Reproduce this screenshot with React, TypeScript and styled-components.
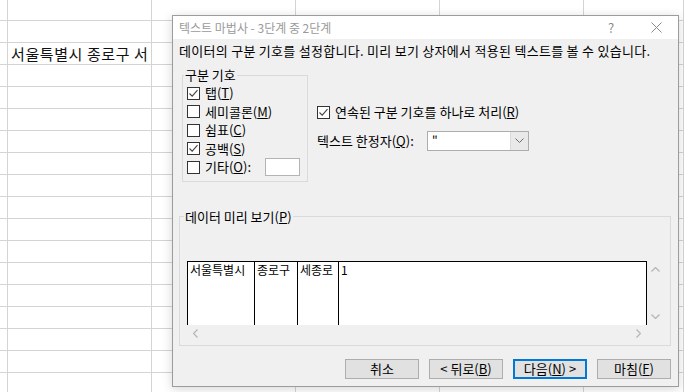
import React from "react";
import styled, { createGlobalStyle } from "styled-components";

const FONT = `"Noto Sans CJK KR", "Noto Sans", sans-serif`;

const GlobalStyle = createGlobalStyle`
  html, body {
    margin: 0;
    padding: 0;
    background: #ffffff;
    overflow: hidden;
  }
  body {
    font-family: ${FONT};
    font-size: 13px;
    color: #000;
  }
`;

const ROWS = 18;
const COLS = 6;

const App: React.FC = () => {
  return (
    <Screen>
      <GlobalStyle />
      <Sheet>
        {Array.from({ length: ROWS * COLS }).map((_, i) => {
          const row = Math.floor(i / COLS);
          const col = i % COLS;
          return <Cell key={i}>{row === 2 && col === 1 ? "서울특별시 종로구 서" : ""}</Cell>;
        })}
      </Sheet>

      <Dialog>
        <TitleBar>
          <TitleText>텍스트 마법사 - 3단계 중 2단계</TitleText>
          <TitleButton>?</TitleButton>
          <CloseButton>
            <svg width="11" height="11" viewBox="0 0 11 11">
              <path d="M0.5 0.5 L10.5 10.5 M10.5 0.5 L0.5 10.5" stroke="#8a8a8a" strokeWidth="1" fill="none" />
            </svg>
          </CloseButton>
        </TitleBar>

        <Body>
          <Instruction>데이터의 구분 기호를 설정합니다. 미리 보기 상자에서 적용된 텍스트를 볼 수 있습니다.</Instruction>

          <OptionsRow>
            <DelimiterGroup>
              <Legend>구분 기호</Legend>
              <CheckRow>
                <CheckBox checked />
                <span>
                  탭(<u>T</u>)
                </span>
              </CheckRow>
              <CheckRow>
                <CheckBox />
                <span>
                  세미콜론(<u>M</u>)
                </span>
              </CheckRow>
              <CheckRow>
                <CheckBox />
                <span>
                  쉼표(<u>C</u>)
                </span>
              </CheckRow>
              <CheckRow>
                <CheckBox checked />
                <span>
                  공백(<u>S</u>)
                </span>
              </CheckRow>
              <CheckRow>
                <CheckBox />
                <span>
                  기타(<u>O</u>):
                </span>
                <OtherInput />
              </CheckRow>
            </DelimiterGroup>

            <SideOptions>
              <CheckRow>
                <CheckBox checked />
                <span>
                  연속된 구분 기호를 하나로 처리(<u>R</u>)
                </span>
              </CheckRow>
              <QualifierRow>
                <QualifierLabel>
                  텍스트 한정자(<u>Q</u>):
                </QualifierLabel>
                <Combo>
                  <ComboValue>"</ComboValue>
                  <ComboButton>
                    <svg width="9" height="5" viewBox="0 0 9 5">
                      <path d="M0.5 0.5 L4.5 4.5 L8.5 0.5" stroke="#6d6d6d" strokeWidth="1" fill="none" />
                    </svg>
                  </ComboButton>
                </Combo>
              </QualifierRow>
            </SideOptions>
          </OptionsRow>

          <PreviewGroup>
            <Legend>
              데이터 미리 보기(<u>P</u>)
            </Legend>
            <Preview>
              <DataGrid>
                <DataCell>서울특별시</DataCell>
                <DataCell>종로구</DataCell>
                <DataCell>세종로</DataCell>
                <DataCell last>1</DataCell>
              </DataGrid>
              <VScroll>
                <ArrowCell>
                  <svg width="9" height="5" viewBox="0 0 9 5">
                    <path d="M0.5 4.5 L4.5 0.5 L8.5 4.5" stroke="#b4b4b4" strokeWidth="1.2" fill="none" />
                  </svg>
                </ArrowCell>
                <ArrowCell>
                  <svg width="9" height="5" viewBox="0 0 9 5">
                    <path d="M0.5 0.5 L4.5 4.5 L8.5 0.5" stroke="#b4b4b4" strokeWidth="1.2" fill="none" />
                  </svg>
                </ArrowCell>
              </VScroll>
              <HScroll>
                <ArrowCell>
                  <svg width="5" height="9" viewBox="0 0 5 9">
                    <path d="M4.5 0.5 L0.5 4.5 L4.5 8.5" stroke="#b4b4b4" strokeWidth="1.2" fill="none" />
                  </svg>
                </ArrowCell>
                <ArrowCell>
                  <svg width="5" height="9" viewBox="0 0 5 9">
                    <path d="M0.5 0.5 L4.5 4.5 L0.5 8.5" stroke="#b4b4b4" strokeWidth="1.2" fill="none" />
                  </svg>
                </ArrowCell>
              </HScroll>
            </Preview>
          </PreviewGroup>

          <ButtonRow>
            <Button>취소</Button>
            <Button>
              &lt; 뒤로(<u>B</u>)
            </Button>
            <Button primary>
              다음(<u>N</u>) &gt;
            </Button>
            <Button>
              마침(<u>F</u>)
            </Button>
          </ButtonRow>
        </Body>
      </Dialog>
    </Screen>
  );
};

const CheckBox: React.FC<{ checked?: boolean }> = ({ checked }) => (
  <Box>
    {checked && (
      <svg width="11" height="11" viewBox="0 0 11 11">
        <path d="M1.5 5.5 L4.2 8.2 L9.5 2.2" stroke="#444" strokeWidth="1.1" fill="none" />
      </svg>
    )}
  </Box>
);

export default App;

const Screen = styled.div`
  position: relative;
  width: 684px;
  height: 392px;
  overflow: hidden;
  font-family: ${FONT};
`;

const Sheet = styled.div`
  display: grid;
  grid-template-columns: 8px repeat(4, 144px) 1fr;
  grid-template-rows: 21px;
  grid-auto-rows: 22px;
`;

const Cell = styled.div`
  box-sizing: border-box;
  border-right: 1px solid #d4d4d4;
  border-bottom: 1px solid #d4d4d4;
  padding-left: 3px;
  font-size: 15px;
  letter-spacing: 0.6px;
  line-height: 21px;
  white-space: nowrap;
  overflow: hidden;
  color: #111;
`;

const Dialog = styled.div`
  position: absolute;
  left: 172px;
  top: 15px;
  width: 507px;
  height: 372px;
  box-sizing: border-box;
  border: 1px solid #9c9c9c;
  background: #f0f0f0;
  box-shadow: 0 2px 10px rgba(0, 0, 0, 0.16);
  display: flex;
  flex-direction: column;
`;

const TitleBar = styled.div`
  height: 23px;
  background: #ffffff;
  display: flex;
  align-items: center;
  padding-left: 6px;
  color: #9a9a9a;
  font-size: 12px;
`;

const TitleText = styled.div`
  flex: 1;
  line-height: 16px;
`;

const TitleButton = styled.div`
  width: 46px;
  height: 23px;
  display: flex;
  align-items: center;
  justify-content: center;
  font-size: 13px;
  color: #8a8a8a;
`;

const CloseButton = styled.div`
  width: 44px;
  height: 23px;
  display: flex;
  align-items: center;
  justify-content: center;
`;

const Body = styled.div`
  flex: 1;
  display: flex;
  flex-direction: column;
  padding: 4px 7px 7px 6px;
`;

const Instruction = styled.div`
  line-height: 16px;
  height: 16px;
  letter-spacing: 0.28px;
  white-space: nowrap;
`;

const OptionsRow = styled.div`
  display: flex;
  margin-top: 8px;
  padding-left: 3px;
`;

const Group = styled.fieldset`
  margin: 0;
  min-width: 0;
  box-sizing: border-box;
  border: 1px solid #dadada;
`;

const DelimiterGroup = styled(Group)`
  width: 126px;
  padding: 1px 4px 4px 4px;
`;

const Legend = styled.legend`
  padding: 0 1px;
  margin-left: -3px;
  line-height: 16px;
  font-size: 13px;
`;

const CheckRow = styled.div`
  display: flex;
  align-items: center;
  height: 18.5px;
  gap: 5px;
  white-space: nowrap;
  line-height: 16px;
`;

const Box = styled.span`
  width: 13px;
  height: 13px;
  box-sizing: border-box;
  border: 1px solid #333333;
  background: #ffffff;
  display: inline-flex;
  align-items: center;
  justify-content: center;
  flex-shrink: 0;
`;

const OtherInput = styled.div`
  width: 35px;
  height: 18px;
  box-sizing: border-box;
  border: 1px solid #b4b4b4;
  background: #ffffff;
  margin-left: 9px;
`;

const SideOptions = styled.div`
  margin-left: 9px;
  padding-top: 36px;
  display: flex;
  flex-direction: column;
`;

const QualifierRow = styled.div`
  display: flex;
  align-items: center;
  margin-top: 9px;
  height: 20px;
`;

const QualifierLabel = styled.div`
  width: 110px;
  line-height: 16px;
  white-space: nowrap;
`;

const Combo = styled.div`
  width: 102px;
  height: 20px;
  box-sizing: border-box;
  border: 1px solid #adadad;
  background: #ffffff;
  display: flex;
`;

const ComboValue = styled.div`
  flex: 1;
  padding-left: 4px;
  line-height: 16px;
  font-size: 12px;
`;

const ComboButton = styled.div`
  width: 17px;
  background: #e9e9e9;
  border-left: 1px solid #dadada;
  display: flex;
  align-items: center;
  justify-content: center;
`;

const PreviewGroup = styled(Group)`
  width: 492px;
  margin-top: 27px;
  padding: 36px 5px 4px 7px;
`;

const Preview = styled.div`
  display: grid;
  grid-template-columns: 1fr 18px;
  grid-template-rows: 64px 16px;
`;

const DataGrid = styled.div`
  display: grid;
  grid-template-columns: 67px 43px 41px 1fr;
  background: #ffffff;
  border-top: 1px solid #000;
`;

const DataCell = styled.div<{ last?: boolean }>`
  border-left: 1px solid #000;
  border-right: ${(p) => (p.last ? "1px solid #000" : "none")};
  padding-left: 2px;
  line-height: 16px;
  font-size: 12px;
  white-space: nowrap;
  overflow: hidden;
`;

const VScroll = styled.div`
  display: flex;
  flex-direction: column;
  justify-content: space-between;
`;

const HScroll = styled.div`
  display: flex;
  justify-content: space-between;
`;

const ArrowCell = styled.div`
  width: 17px;
  height: 17px;
  display: flex;
  align-items: center;
  justify-content: center;
`;

const ButtonRow = styled.div`
  margin-top: auto;
  display: flex;
  justify-content: flex-end;
  gap: 10px;
`;

const Button = styled.div<{ primary?: boolean }>`
  width: 74px;
  height: 20px;
  box-sizing: border-box;
  border: ${(p) => (p.primary ? "2px solid #0078d7" : "1px solid #adadad")};
  background: #e1e1e1;
  display: flex;
  align-items: center;
  justify-content: center;
  font-size: 13px;
  line-height: 16px;
  white-space: nowrap;
`;
